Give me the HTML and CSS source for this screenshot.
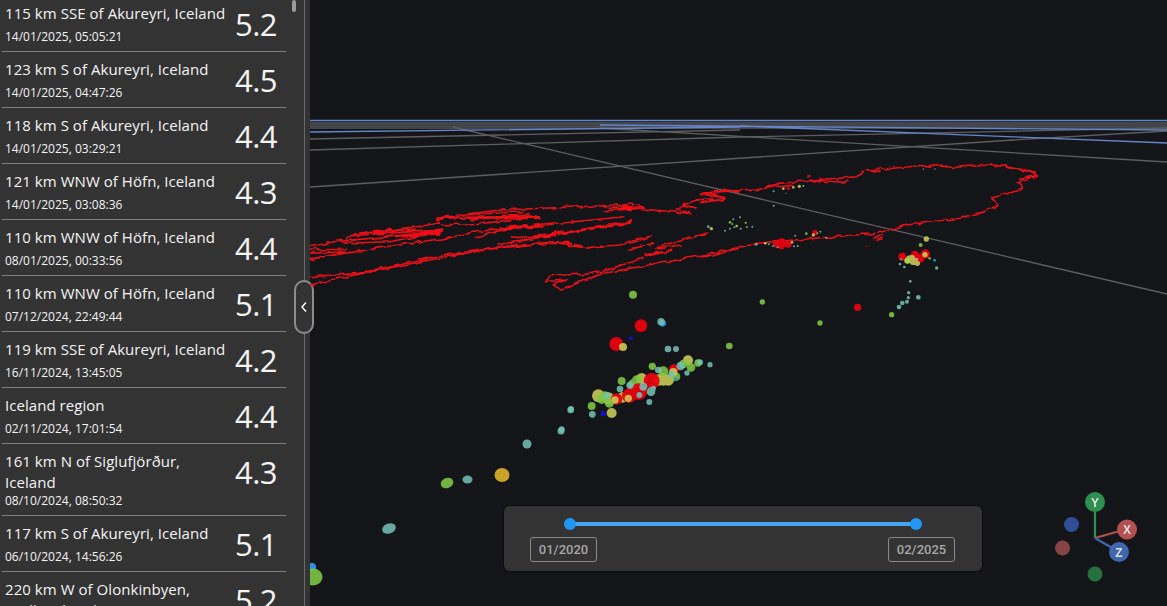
FILE: index.html
```html
<!DOCTYPE html>
<html lang="en">
<head>
<meta charset="utf-8">
<title>Earthquakes</title>
<link rel="stylesheet" href="styles.css">
</head>
<body>
<div class="app">
  <aside class="sidebar">
    <ul class="quakes">
      <li class="quake"><div class="info"><span class="place">115 km SSE of Akureyri, Iceland</span><span class="when">14/01/2025, 05:05:21</span></div><span class="mag">5.2</span></li>
      <li class="quake"><div class="info"><span class="place">123 km S of Akureyri, Iceland</span><span class="when">14/01/2025, 04:47:26</span></div><span class="mag">4.5</span></li>
      <li class="quake"><div class="info"><span class="place">118 km S of Akureyri, Iceland</span><span class="when">14/01/2025, 03:29:21</span></div><span class="mag">4.4</span></li>
      <li class="quake"><div class="info"><span class="place">121 km WNW of Höfn, Iceland</span><span class="when">14/01/2025, 03:08:36</span></div><span class="mag">4.3</span></li>
      <li class="quake"><div class="info"><span class="place">110 km WNW of Höfn, Iceland</span><span class="when">08/01/2025, 00:33:56</span></div><span class="mag">4.4</span></li>
      <li class="quake"><div class="info"><span class="place">110 km WNW of Höfn, Iceland</span><span class="when">07/12/2024, 22:49:44</span></div><span class="mag">5.1</span></li>
      <li class="quake"><div class="info"><span class="place">119 km SSE of Akureyri, Iceland</span><span class="when">16/11/2024, 13:45:05</span></div><span class="mag">4.2</span></li>
      <li class="quake"><div class="info"><span class="place">Iceland region</span><span class="when">02/11/2024, 17:01:54</span></div><span class="mag">4.4</span></li>
      <li class="quake"><div class="info"><span class="place">161 km N of Siglufjörður, Iceland</span><span class="when">08/10/2024, 08:50:32</span></div><span class="mag">4.3</span></li>
      <li class="quake"><div class="info"><span class="place">117 km S of Akureyri, Iceland</span><span class="when">06/10/2024, 14:56:26</span></div><span class="mag">5.1</span></li>
      <li class="quake"><div class="info"><span class="place">220 km W of Olonkinbyen, Svalbard and Jan Mayen</span></div><span class="mag">5.2</span></li>
    </ul>
    <div class="thumb"></div>
    <button class="collapse" type="button" aria-label="Collapse">
      <svg class="chevron" viewBox="0 0 8 12"><path d="M6 1.5 L2 6 L6 10.5"/></svg>
    </button>
  </aside>
  <main class="stage">
    <svg class="scene" viewBox="310 0 857 606" preserveAspectRatio="none">
      <defs>
        <filter id="jag" x="-5%" y="-15%" width="110%" height="130%">
          <feTurbulence type="fractalNoise" baseFrequency="0.04" numOctaves="2" seed="4" result="n"/>
          <feDisplacementMap in="SourceGraphic" in2="n" scale="16" xChannelSelector="R" yChannelSelector="G"/>
        </filter>
      </defs>
      <g class="grid">
        <path class="band" d="M310 125.500H1167"/>
        <path d="M310 139L740 130M310 150L740 137L1167 128M310 187L1013 140L1167 131"/>
        <path d="M453 127L1167 294M600 128L1167 162"/>
      </g>
      <g class="blue-lines">
        <path d="M310 120.500H1167"/>
        <path d="M310 132L740 127M740 126L1167 143M600 125L1167 130"/>
      </g>

      <g transform="translate(310 110) scale(.3333)" class="coast">
        <path d="M0 410L110 388L115 378L190 365L320 350L385 340L380 325L470 312L570 300L700 295L880 287L990 282L1005 298L1090 305L1145 311L1100 297L1120 285L1155 293L1120 282L1170 268L1245 266L1240 258L1170 252L1230 243L1290 246"/>
        <path d="M0 420L115 418M0 430L110 425M0 447L105 428M85 395L400 362M120 390L395 368M190 368L320 352M100 400L240 395L400 365M120 378L320 360M190 372L400 360M220 380L390 372"/>
        <path d="M380 325L690 320M470 322L680 318M460 315L640 305M390 345L520 340L690 320M400 322L690 325M480 330L660 312M880 303L1000 295M900 295L1000 290M930 285L1000 300"/>
        <path d="M0 447L200 415L330 395L410 385L500 365L580 355L700 345L940 320M500 380L600 355L700 350M560 405L730 375L960 340L965 335L900 345L740 370M520 362L600 350L690 345M600 385L740 372M650 390L740 365"/>
        <path d="M690 380L740 372M700 372L735 378M620 392L720 378"/>
        <path d="M0 500L150 490L190 480L300 455L345 447L400 435L500 422L620 405L740 400L800 405L830 415L850 410L930 405L985 385L1030 378"/>
        <path d="M0 525L120 498L330 455L520 420L730 395L790 398M430 431L470 430M770 405L810 408M770 400L815 415"/>
        <path d="M950 420L1030 400M960 400L1030 378M1035 415L1115 405M1005 435L1060 425M1005 440L1090 420M1040 410L1190 372"/>
        <path d="M705 515L720 495L800 490L815 495L880 483L1000 445M705 515L770 510L730 525L750 540L880 490L1100 450L1290 415"/>
      </g>
      <g transform="translate(700 110) scale(.3333)" class="coast">
        <path d="M0 440L40 437L130 410L170 400L400 380L530 370L620 345L780 325L850 305L895 285L878 265L965 238L955 215L1010 198L975 180L880 165L760 172L680 165L580 175L500 180L470 200L340 210L240 220L170 240L60 245L0 250"/>
        <path d="M0 255L70 262L75 268L0 278M340 212L445 217M500 180L545 185M900 168L985 185L1005 190M960 205L1010 198M665 168L695 168M180 236L280 226M322 198L332 198M0 375L22 370M522 385L550 375M497 411L503 410M530 392L548 385"/>
      </g>

      <g transform="translate(700 110) scale(.3333)">
        <g class="red">
          <circle cx="230" cy="402" r="11"/><circle cx="245" cy="397" r="12"/><circle cx="245" cy="408" r="10"/><circle cx="265" cy="403" r="10"/><circle cx="345" cy="368" r="8"/><circle cx="265" cy="235" r="5"/>
          <circle cx="607" cy="440" r="12"/><circle cx="645" cy="435" r="13"/><circle cx="660" cy="445" r="13"/><circle cx="676" cy="432" r="14"/><circle cx="473" cy="592" r="11"/>
        </g>
        <g class="teal">
          <circle cx="25" cy="350" r="4"/><circle cx="75" cy="362" r="3"/><circle cx="90" cy="356" r="3"/><circle cx="103" cy="352" r="3"/><circle cx="122" cy="356" r="3"/><circle cx="100" cy="328" r="3"/><circle cx="120" cy="322" r="3"/><circle cx="157" cy="350" r="3"/>
          <circle cx="169" cy="403" r="4"/><circle cx="207" cy="403" r="3"/><circle cx="219" cy="408" r="3"/><circle cx="233" cy="412" r="3"/><circle cx="282" cy="409" r="3"/><circle cx="293" cy="408" r="3"/><circle cx="286" cy="377" r="3"/><circle cx="361" cy="365" r="3"/><circle cx="379" cy="383" r="3"/>
          <circle cx="221" cy="244" r="3"/><circle cx="258" cy="250" r="2"/><circle cx="221" cy="287" r="3"/><circle cx="310" cy="228" r="3"/><circle cx="670" cy="177" r="2"/><circle cx="705" cy="177" r="2"/>
          <circle cx="710" cy="474" r="5"/><circle cx="600" cy="462" r="4"/><circle cx="613" cy="471" r="4"/><circle cx="604" cy="448" r="3"/>
          <circle cx="631" cy="514" r="4"/><circle cx="626" cy="548" r="5"/><circle cx="625" cy="563" r="5"/><circle cx="621" cy="575" r="6"/><circle cx="607" cy="579" r="7"/><circle cx="597" cy="591" r="7"/><circle cx="655" cy="562" r="7"/>
        </g>
        <g class="green">
          <circle cx="90" cy="337" r="4"/><circle cx="97" cy="342" r="3"/><circle cx="141" cy="351" r="3"/><circle cx="319" cy="371" r="4"/><circle cx="352" cy="370" r="3"/>
          <circle cx="662" cy="405" r="6"/><circle cx="689" cy="445" r="4"/><circle cx="575" cy="614" r="8"/><circle cx="187" cy="576" r="8"/><circle cx="360" cy="639" r="8"/>
        </g>
        <g class="yellow">
          <circle cx="34" cy="356" r="5"/><circle cx="110" cy="348" r="4"/><circle cx="137" cy="338" r="3"/><circle cx="196" cy="400" r="4"/><circle cx="276" cy="397" r="4"/><circle cx="340" cy="375" r="5"/><circle cx="250" cy="236" r="4"/><circle cx="280" cy="232" r="4"/><circle cx="298" cy="229" r="5"/>
          <circle cx="679" cy="387" r="8"/><circle cx="675" cy="434" r="8"/><circle cx="630" cy="448" r="12"/><circle cx="640" cy="455" r="10"/><circle cx="652" cy="460" r="8"/><circle cx="637" cy="443" r="8"/>
        </g>
        <circle class="lime" cx="622" cy="452" r="9"/>
        <circle class="pink" cx="650" cy="448" r="5"/>
        <circle class="sky" cx="704" cy="451" r="4"/>
      </g>

      <g transform="translate(540 280) scale(.3333)">
        <circle class="green" cx="279" cy="44" r="12"/>
        <circle class="red" cx="303" cy="137" r="19"/>
        <circle class="sky" cx="368" cy="130" r="10"/><circle class="teal" cx="363" cy="125" r="11"/>
        <circle class="red" cx="229" cy="192" r="21"/><circle class="yellow" cx="249" cy="201" r="12"/>
        <circle class="navy" cx="272" cy="175" r="6"/>
        <circle class="teal" cx="384" cy="207" r="10"/><circle class="teal" cx="408" cy="207" r="9"/>
        <circle class="green" cx="568" cy="198" r="10"/>
        <g class="yellow">
          <circle cx="175" cy="347" r="19"/><circle cx="248" cy="352" r="16"/><circle cx="370" cy="298" r="19"/><circle cx="385" cy="300" r="17"/><circle cx="444" cy="241" r="15"/><circle cx="215" cy="399" r="15"/><circle cx="305" cy="296" r="17"/><circle cx="205" cy="355" r="18"/><circle cx="355" cy="300" r="17"/>
        </g>
        <g class="green">
          <circle cx="195" cy="352" r="18"/><circle cx="208" cy="369" r="14"/><circle cx="155" cy="378" r="12"/><circle cx="245" cy="303" r="12"/><circle cx="337" cy="259" r="11"/><circle cx="370" cy="274" r="15"/><circle cx="453" cy="262" r="13"/><circle cx="290" cy="300" r="14"/><circle cx="408" cy="290" r="13"/><circle cx="474" cy="249" r="11"/><circle cx="185" cy="358" r="14"/><circle cx="280" cy="312" r="15"/><circle cx="430" cy="252" r="13"/>
        </g>
        <g class="red">
          <circle cx="402" cy="268" r="15"/><circle cx="335" cy="303" r="24"/><circle cx="296" cy="335" r="25"/><circle cx="268" cy="347" r="22"/><circle cx="230" cy="357" r="17"/>
        </g>
        <g class="yellow">
          <circle cx="225" cy="360" r="11"/><circle cx="400" cy="276" r="12"/><circle cx="265" cy="355" r="11"/>
        </g>
        <g class="teal">
          <circle cx="480" cy="247" r="9"/><circle cx="510" cy="254" r="8"/><circle cx="441" cy="279" r="8"/><circle cx="422" cy="258" r="13"/><circle cx="355" cy="270" r="10"/><circle cx="240" cy="327" r="10"/><circle cx="270" cy="316" r="11"/><circle cx="298" cy="345" r="9"/><circle cx="328" cy="366" r="9"/><circle cx="333" cy="335" r="13"/><circle cx="340" cy="325" r="8"/><circle cx="310" cy="320" r="12"/><circle cx="395" cy="282" r="10"/><circle cx="92" cy="390" r="10"/><circle cx="157" cy="403" r="10"/><circle cx="65" cy="448" r="9"/><circle cx="200" cy="347" r="10"/>
        </g>
        <circle class="sky" cx="408" cy="298" r="5"/>
        <circle class="navy" cx="190" cy="401" r="8"/>
      </g>

      <g>
        <circle class="teal" cx="527" cy="444" r="4.500"/>
        <circle class="teal" cx="561" cy="431" r="3.500"/>
        <circle class="teal" cx="571" cy="409" r="3"/>
        <ellipse class="green" cx="447" cy="483" rx="6.500" ry="5" transform="rotate(-20 447 483)"/>
        <ellipse class="teal" cx="467.500" cy="479.500" rx="5" ry="4"/>
        <ellipse class="gold" cx="502" cy="475" rx="7.500" ry="7"/>
        <ellipse class="teal" cx="389" cy="528.500" rx="7" ry="5" transform="rotate(-20 389 528.500)"/>
        <circle class="sky" cx="312" cy="567" r="4"/>
        <ellipse class="green" cx="313" cy="577" rx="9.500" ry="8.500"/>
      </g>

      <g class="gizmo">
        <circle class="axis-neg-z" cx="1071.500" cy="524.500" r="7.500"/>
        <circle class="axis-neg-x" cx="1062.500" cy="548" r="7.500"/>
        <circle class="axis-neg-y" cx="1095" cy="574" r="7.500"/>
        <path class="line-y" d="M1095 538V502"/>
        <path class="line-x" d="M1095 538L1127 529"/>
        <path class="line-z" d="M1095 538L1119 552"/>
        <circle class="axis-y" cx="1095" cy="502" r="10"/>
        <circle class="axis-x" cx="1127" cy="529.500" r="10"/>
        <circle class="axis-z" cx="1119" cy="552" r="10"/>
        <text x="1095" y="506.500">Y</text>
        <text x="1127" y="534">X</text>
        <text x="1119" y="556.500">Z</text>
      </g>
    </svg>

    <div class="range">
      <div class="track">
        <span class="knob"></span>
        <span class="knob"></span>
      </div>
      <div class="labels">
        <span class="label">01/2020</span>
        <span class="label">02/2025</span>
      </div>
    </div>
  </main>
</div>
</body>
</html>
```

FILE: styles.css
```css
* { box-sizing: border-box; }

html, body {
  margin: 0;
  height: 100%;
  overflow: hidden;
  background: #141519;
}

.app {
  display: flex;
  height: 606px;
}

.sidebar {
  position: relative;
  flex: 0 0 310px;
  height: 100%;
  background: #333333;
  border-right: 5px solid #333333;
  box-shadow: inset -1px 0 0 #6a6a6a;
  color: #f4f4f4;
  font-family: "Open Sans", "Noto Sans", sans-serif;
}

.quakes {
  list-style: none;
  margin: -4px 0 0;
  padding: 0 19px 0 2px;
  height: 610px;
  overflow: hidden;
}

.quake {
  display: flex;
  justify-content: space-between;
  min-height: 56px;
  border-bottom: 1px solid #808080;
}

.info {
  display: flex;
  flex-direction: column;
  justify-content: space-between;
  width: 226px;
  padding: 7px 0 7px 3px;
}

.place {
  font-size: 15px;
  line-height: 21px;
  letter-spacing: 0.05px;
}

.when {
  font-size: 12px;
  line-height: 15px;
}

.mag {
  flex: 0 0 58px;
  margin-top: 8px;
  padding-right: 2px;
  text-align: center;
  font-size: 31px;
  line-height: 40px;
  letter-spacing: -0.5px;
}

.thumb {
  position: absolute;
  top: 0;
  left: 292px;
  width: 4px;
  height: 12px;
  border-radius: 2px;
  background: #9a9a9a;
}

.collapse {
  position: absolute;
  top: 280px;
  left: 294px;
  display: flex;
  align-items: center;
  justify-content: center;
  width: 20px;
  height: 54px;
  padding: 0;
  border: 2px solid #8c8c8c;
  border-radius: 10px;
  background: #333333;
}

.chevron {
  width: 8px;
  height: 12px;
  fill: none;
  stroke: #ffffff;
  stroke-width: 1.500;
}

.stage {
  position: relative;
  flex: 1;
  height: 100%;
  overflow: hidden;
}

.scene {
  display: block;
  width: 100%;
  height: 100%;
  filter: blur(0.35px);
}

.grid path {
  fill: none;
  stroke: #5e5e60;
  stroke-width: 1.300;
}

.grid .band {
  stroke: #44454a;
  stroke-width: 7;
}

.blue-lines path {
  fill: none;
  stroke: #6485c8;
  stroke-width: 1.400;
}

.coast {
  filter: url(#jag);
}

.coast path {
  fill: none;
  stroke: #f01018;
  stroke-width: 4.500;
  stroke-linejoin: round;
}

.teal { fill: #74c2b6; opacity: .85; }
.green { fill: #7fc844; opacity: .88; }
.red { fill: #e8000f; opacity: .94; }
.yellow { fill: #c9cf58; opacity: .88; }
.lime { fill: #a5d648; }
.pink { fill: #e59aa0; }
.sky { fill: #2a8fe0; }
.navy { fill: #1010c8; }
.gold { fill: #c9a328; }

.axis-y { fill: #2f8f4e; }
.axis-x { fill: #b4504f; }
.axis-z { fill: #3f66ae; }
.axis-neg-y { fill: #24703f; }
.axis-neg-x { fill: #864444; }
.axis-neg-z { fill: #2f4e96; }

.line-y, .line-x, .line-z {
  fill: none;
  stroke-width: 2.200;
}
.line-y { stroke: #2f8f4e; }
.line-x { stroke: #b4504f; }
.line-z { stroke: #3f66ae; }

.gizmo text {
  fill: #e0e0e0;
  font-family: "Liberation Sans", sans-serif;
  font-size: 12px;
  font-weight: 700;
  text-anchor: middle;
}

.range {
  position: absolute;
  left: 193px;
  top: 505px;
  display: flex;
  flex-direction: column;
  width: 480px;
  height: 67px;
  padding: 16px 27px 0 26px;
  border: 1px solid #0b0b0d;
  border-radius: 7px;
  background: #333333;
}

.track {
  display: flex;
  flex: none;
  height: 4px;
  min-height: 0;
  align-items: center;
  justify-content: space-between;
  margin: 0 39px 0 40px;
  border-radius: 2px;
  background: #46a4f2;
}

.knob {
  flex: none;
  width: 12px;
  height: 12px;
  margin: 0 -6px;
  border-radius: 50%;
  background: #2196f3;
}

.labels {
  display: flex;
  justify-content: space-between;
  margin-top: 11px;
}

.label {
  width: 67px;
  height: 25px;
  border: 1px solid #8a8a8a;
  border-radius: 3px;
  color: #a6a6a6;
  font-family: Roboto, sans-serif;
  font-size: 13px;
  font-weight: 500;
  line-height: 23px;
  text-align: center;
}
```
